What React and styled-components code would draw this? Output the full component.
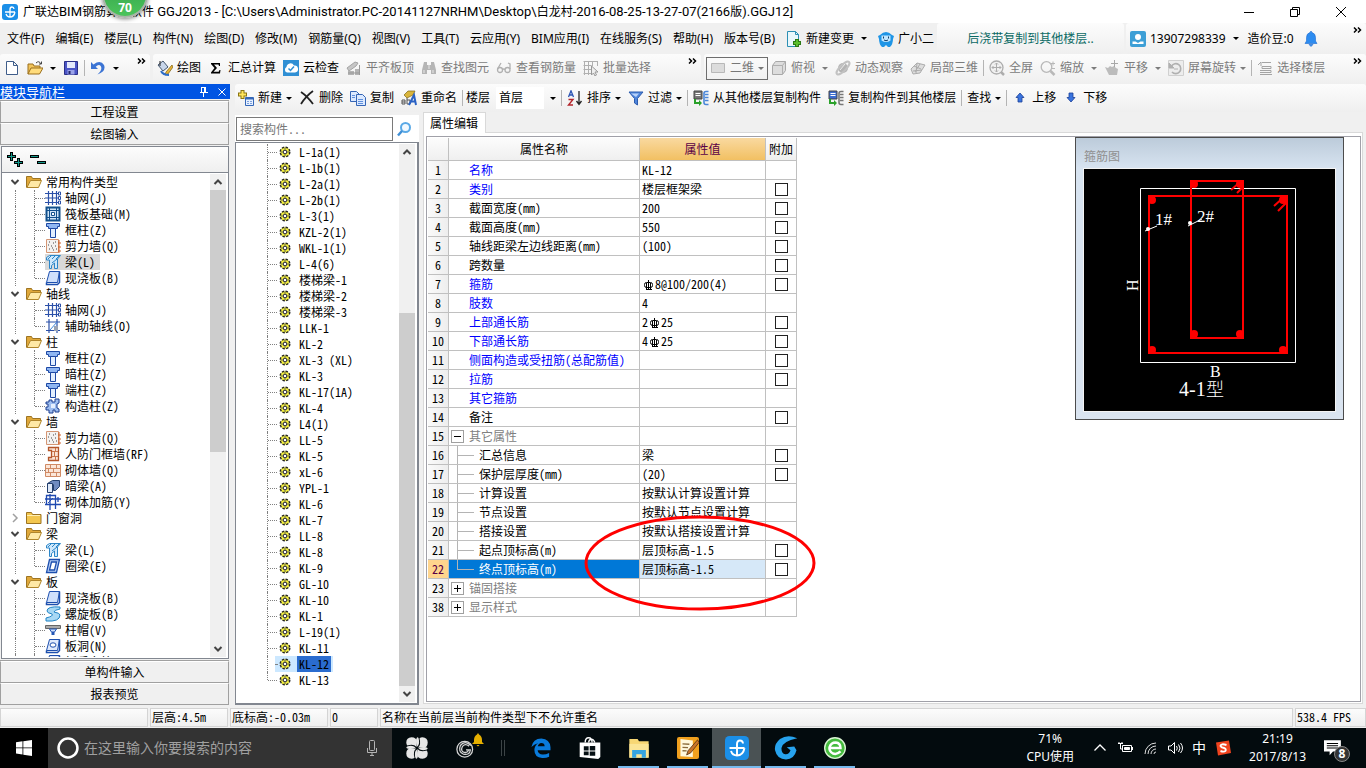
import styled, { createGlobalStyle, css } from 'styled-components'

// ? data
const menus = [
	'文件(F)',
	'编辑(E)',
	'楼层(L)',
	'构件(N)',
	'绘图(D)',
	'修改(M)',
	'钢筋量(Q)',
	'视图(V)',
	'工具(T)',
	'云应用(Y)',
	'BIM应用(I)',
	'在线服务(S)',
	'帮助(H)',
	'版本号(B)',
]

const drawTools = [
	{ icon: 'brush', label: '绘图' },
	{ icon: 'sigma', label: '汇总计算' },
	{ icon: 'cloud', label: '云检查' },
	{ icon: 'align', label: '平齐板顶', off: true },
	{ icon: 'binoculars', label: '查找图元', off: true },
	{ icon: 'glasses', label: '查看钢筋量', off: true },
	{ icon: 'batch', label: '批量选择', off: true },
]

const tree = [
	{
		name: '常用构件类型',
		open: true,
		items: [
			['grid', '轴网(J)'],
			['raft', '筏板基础(M)'],
			['column', '框柱(Z)'],
			['wall', '剪力墙(Q)'],
			['beam', '梁(L)', true],
			['slab', '现浇板(B)'],
		],
	},
	{
		name: '轴线',
		open: true,
		items: [
			['grid', '轴网(J)'],
			['axis', '辅助轴线(O)'],
		],
	},
	{
		name: '柱',
		open: true,
		items: [
			['column', '框柱(Z)'],
			['column', '暗柱(Z)'],
			['column', '端柱(Z)'],
			['gear', '构造柱(Z)'],
		],
	},
	{
		name: '墙',
		open: true,
		items: [
			['wall', '剪力墙(Q)'],
			['doorWall', '人防门框墙(RF)'],
			['brick', '砌体墙(Q)'],
			['hidden', '暗梁(A)'],
			['mesh', '砌体加筋(Y)'],
		],
	},
	{ name: '门窗洞', open: false, items: [] },
	{
		name: '梁',
		open: true,
		items: [
			['beam', '梁(L)'],
			['ring', '圈梁(E)'],
		],
	},
	{
		name: '板',
		open: true,
		more: true,
		items: [
			['slab', '现浇板(B)'],
			['spiral', '螺旋板(B)'],
			['cap', '柱帽(V)'],
			['hole', '板洞(N)'],
			['hole', '板受力筋(S)'],
		],
	},
]

const beams = [
	'L-1a(1)',
	'L-1b(1)',
	'L-2a(1)',
	'L-2b(1)',
	'L-3(1)',
	'KZL-2(1)',
	'WKL-1(1)',
	'L-4(6)',
	'楼梯梁-1',
	'楼梯梁-2',
	'楼梯梁-3',
	'LLK-1',
	'KL-2',
	'XL-3 (XL)',
	'KL-3',
	'KL-17(1A)',
	'KL-4',
	'L4(1)',
	'LL-5',
	'KL-5',
	'xL-6',
	'YPL-1',
	'KL-6',
	'KL-7',
	'LL-8',
	'KL-8',
	'KL-9',
	'GL-10',
	'KL-10',
	'KL-1',
	'L-19(1)',
	'KL-11',
	'KL-12',
	'KL-13',
]

// kind: b = blue name, n = normal, s = child of a section, g = section header
const props = [
	{ no: 1, kind: 'b', name: '名称', value: 'KL-12' },
	{ no: 2, kind: 'b', name: '类别', value: '楼层框架梁', check: true },
	{ no: 3, kind: 'n', name: '截面宽度(mm)', value: '200', check: true },
	{ no: 4, kind: 'n', name: '截面高度(mm)', value: '550', check: true },
	{ no: 5, kind: 'n', name: '轴线距梁左边线距离(mm)', value: '(100)', check: true },
	{ no: 6, kind: 'n', name: '跨数量', value: '', check: true },
	{ no: 7, kind: 'b', name: '箍筋', bar: ['', '8@100/200(4)'], check: true },
	{ no: 8, kind: 'b', name: '肢数', value: '4' },
	{ no: 9, kind: 'b', name: '上部通长筋', bar: ['2', '25'], check: true },
	{ no: 10, kind: 'b', name: '下部通长筋', bar: ['4', '25'], check: true },
	{ no: 11, kind: 'b', name: '侧面构造或受扭筋(总配筋值)', value: '', check: true },
	{ no: 12, kind: 'b', name: '拉筋', value: '', check: true },
	{ no: 13, kind: 'b', name: '其它箍筋', value: '' },
	{ no: 14, kind: 'n', name: '备注', value: '', check: true },
	{ no: 15, kind: 'g', name: '其它属性', value: '', sign: 'minus' },
	{ no: 16, kind: 's', name: '汇总信息', value: '梁', check: true },
	{ no: 17, kind: 's', name: '保护层厚度(mm)', value: '(20)', check: true },
	{ no: 18, kind: 's', name: '计算设置', value: '按默认计算设置计算' },
	{ no: 19, kind: 's', name: '节点设置', value: '按默认节点设置计算' },
	{ no: 20, kind: 's', name: '搭接设置', value: '按默认搭接设置计算' },
	{ no: 21, kind: 's', name: '起点顶标高(m)', value: '层顶标高-1.5', check: true },
	{ no: 22, kind: 's', name: '终点顶标高(m)', value: '层顶标高-1.5', check: true, active: true },
	{ no: 23, kind: 'g', name: '锚固搭接', value: '', sign: 'plus' },
	{ no: 38, kind: 'g', name: '显示样式', value: '', sign: 'plus' },
]

// ? icons, all on a 16 x 16 box
const floors = (page, line) => (
	<>
		<path d="M1 1h8v8H1z" fill={page} stroke="#444" />
		<path d="M2.5 3.5h5M2.5 5.5h5" stroke="#fff" />
		<path d="M3 9v3h3v-2l3 3-3 3v-2H1V9z" fill="#2aa12a" />
		<path d="M15.5 1.5H13q-2 0-2 2v9q0 2 2 2h2.5M12 4.5h3.500M12 7.500h3.500M12 10.500h3.500" stroke={line} strokeWidth="1.600" fill="none" />
	</>
)

const icons = {
	app: (
		<>
			<rect width="16" height="16" rx="3" fill="#1b8fe8" />
			<path d="M3 8h10M8 13V5.500q0-2.500 2-2.500 1.800 0 2 2M4 10q1 3 4 3 4 0 5-5" stroke="#fff" strokeWidth="1.300" fill="none" />
		</>
	),
	file: <path d="M2.500 1.500h7l4 4v9h-11zM9.500 1.500v4h4" fill="#fff" stroke="#3f5d8a" />,
	open: (
		<>
			<path d="M1 14V4h5l1 2h6v3" fill="#f2c45a" stroke="#9a6e1c" />
			<path d="M1 14l3-6h12l-3.500 6z" fill="#ffdc7c" stroke="#9a6e1c" />
			<path d="M9 3q3-3 5 1M14.500 1.500V4H12" stroke="#444" fill="none" />
		</>
	),
	save: (
		<>
			<path d="M1.500 1.500h13v13h-13z" fill="#4b55c6" stroke="#2b2f86" />
			<path d="M4 2h8v6H4z" fill="#e4e9fb" />
			<path d="M4.500 10h7v4.500h-7z" fill="#9aa2e8" />
			<path d="M5.500 11h2v3h-2z" fill="#23276d" />
		</>
	),
	undo: <path d="M1 2v7h7L5.700 6.700Q9 3.500 11 6.500q1.500 4-3.500 8 9-3.500 6.500-9.500Q10.500-.5 3.500 4.500z" fill="#3c74d4" />,
	brush: (
		<>
			<path d="M1 5l5-4 5 6-5 4z" fill="#c8d6ea" stroke="#44566e" />
			<path d="M3 1v5" stroke="#222" />
			<path d="M15 5l-6 7-1 3 3-1 5-7z" fill="#e8b434" stroke="#7a5c10" strokeWidth=".7" />
			<path d="M4 11q2 4 8 4" stroke="#2c6cc8" strokeWidth="2" fill="none" />
		</>
	),
	sigma: <path d="M3 3h9v3h-1l-.5-1.500H6L9 8l-3.500 3.700h5.200L11.500 10h1l-.5 3.500H3v-1L6.500 8 3 4z" fill="#000" />,
	cloud: (
		<>
			<rect width="16" height="16" fill="#2f8fd4" />
			<path d="M4 12.500a3 3 0 0 1-.5-5.500A4 4 0 0 1 11 5.500a3.500 3.500 0 0 1 1 7z" fill="#fff" />
			<path d="M5.500 8.500l2 2 3.500-4" stroke="#2f8fd4" strokeWidth="1.500" fill="none" />
		</>
	),
	align: (
		<>
			<path d="M1 8l8-6 3 1-2 3-7 5z" fill="#c6c6c6" stroke="#a4a4a4" />
			<path d="M2 11h6v4H2zM9 9h4v6H9z" fill="#b4b4b4" />
			<path d="M13.500 5v10M2 13h11" stroke="#999" />
		</>
	),
	binoculars: (
		<>
			<path d="M3 2h3v3h4V2h3l2 8v4h-5v-4H6v4H1v-4z" fill="#b5b5b5" />
			<path d="M3 10v3M12 10v3M8 5v4" stroke="#e8e8e8" />
		</>
	),
	glasses: (
		<g stroke="#b0b0b0" fill="none" strokeWidth="1.300">
			<circle cx="4" cy="10" r="2.500" />
			<circle cx="11.500" cy="10" r="2.500" />
			<path d="M6.500 9.500q1.200-1 2.500 0M1.500 9L5 3M14 9V4l-2-1" />
		</g>
	),
	batch: (
		<>
			<path d="M.5 1.500h14M.5 5.500h8M.5 9.500h8M.5 13.500h8M1.500 1v14M5.500 1v14M9.500 1v5M14.500 1v5" stroke="#b0b0b0" />
			<path d="M8.500 6v9l2-2 1.500 3 1.500-1-1.500-3h3z" stroke="#999" fill="#eee" />
		</>
	),
	flat: <path d="M1.500 3.500h13v9h-13z" fill="#dcdcdc" stroke="#b8b8b8" />,
	cube: (
		<>
			<path d="M1.500 5.500l3-4h10v9l-3 4h-10z" fill="#ddd" stroke="#a8a8a8" />
			<path d="M1.500 5.500h10v9M11.500 5.500l3-4" stroke="#b0b0b0" fill="none" />
		</>
	),
	planet: (
		<>
			<circle cx="8" cy="8" r="5" fill="#b4b4b4" />
			<ellipse cx="8" cy="8" rx="8.500" ry="3" transform="rotate(-45 8 8)" fill="none" stroke="#c2c2c2" strokeWidth="2" />
			<path d="M5 10l5-6" stroke="#eee" />
		</>
	),
	local3d: (
		<g fill="#dedede" stroke="#acacac">
			<path d="M1 9l6-6 8 2-5 8-7 1z" />
			<path d="M4 6l7 3M7 3l-1 10M3 11l9-1M10 4l-5 8" fill="none" />
		</g>
	),
	full: (
		<g stroke="#adadad" fill="none">
			<circle cx="7.500" cy="7.500" r="6.500" fill="#f1f1f1" strokeWidth="1.300" />
			<path d="M7.500 3v9M3 7.500h9M6 4.500L7.500 3 9 4.500M6 10.500L7.500 12 9 10.500M4.500 6L3 7.500 4.500 9M10.500 6L12 7.500 10.500 9" />
			<path d="M12 12l3 3" strokeWidth="2.500" />
		</g>
	),
	zoom: (
		<g stroke="#b8b8b8" fill="none">
			<circle cx="6.500" cy="7" r="5.300" strokeWidth="1.300" />
			<path d="M10.500 11l4 4" strokeWidth="2.500" />
			<path d="M11 3.500h4M13 1.500v4M12 8.500h3" />
		</g>
	),
	pan: (
		<>
			<path d="M1 7l3 1 2-2 2 1 2-1 2 2 2 1-1 6H5z" fill="#bcbcbc" />
			<path d="M7 3.500h7M10.500 0v7" stroke="#a8a8a8" />
		</>
	),
	rotate: (
		<>
			<path d="M.5.5h15v15H.5z" fill="#ededed" stroke="#d0d0d0" />
			<path d="M4 12a5 5 0 1 0-.5-6" stroke="#b0b0b0" strokeWidth="1.600" fill="none" />
			<path d="M1 3v5h5zM6 9h4" fill="#b0b0b0" stroke="#b0b0b0" />
		</>
	),
	pickFloor: <path d="M5 2.500h9M1 5l3-3v4M5 6.500h9v2H5zM3 10.500h11v2H3M3 14.500h12" stroke="#a4a4a4" fill="none" />,
	add: (
		<>
			<path d="M4.500 0v9M0 4.500h9" stroke="#8a7412" strokeWidth="4" />
			<path d="M4.500 1v7M1 4.500h7" stroke="#ffe45c" strokeWidth="2" />
			<path d="M7.500 7.500h8v8h-8z" fill="#e6f0ff" stroke="#3467b8" />
			<path d="M8 8.500h7" stroke="#3467b8" strokeWidth="2" />
			<path d="M9 11.500h2M12 11.500h2M9 13.500h2M12 13.500h2" stroke="#7ba0dd" />
		</>
	),
	remove: <path d="M2 2q6 4 12 12M14 1Q7 6 2 14" stroke="#222" strokeWidth="1.800" fill="none" />,
	copy: (
		<g fill="#dbe9ff" stroke="#3565b5">
			<path d="M.5 1.500h6l3 3v7h-9z" />
			<path d="M6.500 4.500h6l3 3v8h-9z" />
			<path d="M2 5.500h3M2 7.500h3M8 9.500h5M8 11.500h5M8 13.500h5" stroke="#5f8fdc" />
		</g>
	),
	rename: (
		<>
			<path d="M3 5l4-4h7l-2 4-6 3z" fill="#d9b53c" stroke="#7c6418" strokeWidth=".7" />
			<path d="M1 10h3v4H1zM1 12h3M6 8v6h3v-4H6" stroke="#555" fill="none" />
			<path d="M8 15l5-10 2 10M10 11.500h4.500" stroke="#2a62c4" strokeWidth="2" fill="none" />
		</>
	),
	sort: (
		<>
			<path d="M1.500 7L4 .8 6.500 7M2.500 5h3" stroke="#2c55b4" strokeWidth="1.300" fill="none" />
			<path d="M1.500 9.500h4.500L1.500 15H6" stroke="#b4262c" strokeWidth="1.400" fill="none" />
			<path d="M12 1v13M9.500 11L12 14.500 14.500 11" stroke="#222" strokeWidth="1.300" fill="none" />
		</>
	),
	filter: (
		<>
			<path d="M1 2h14L9.500 8.500V15l-3-2V8.500z" fill="#4f86dc" stroke="#2d5cae" />
			<path d="M3 3.500h8L8 7z" fill="#b8d2fa" />
		</>
	),
	fromFloor: floors('#777', '#4a86d8'),
	toFloor: floors('#3c6cd0', '#777'),
	up: <path d="M8 3l4 4.500h-2V12H6V7.500H4z" fill="#3a74de" stroke="#1b3f97" strokeWidth=".8" />,
	down: <path d="M8 12L4 7.500h2V3h4v4.500h2z" fill="#3a74de" stroke="#1b3f97" strokeWidth=".8" />,
	change: (
		<>
			<path d="M1.500.5h8l3 3v12h-11z" fill="#e9f7fc" stroke="#2c8fb4" />
			<path d="M9.500.5v3h3" fill="none" stroke="#2c8fb4" />
			<path d="M11 8v8M7 12h8" stroke="#2c7a16" strokeWidth="4" />
			<path d="M11 9v6M8 12h6" stroke="#5cc02c" strokeWidth="2" />
		</>
	),
	robot: (
		<>
			<path d="M2 4q6-6 12 0l2 1-1 3q0 5-3 8h-2l-2-2-2 2H4Q1 13 1 8L0 5z" fill="#1f95e6" />
			<path d="M3.500 4.500h9v5q-4.500 3-9 0z" fill="#bfe6ff" />
			<path d="M5.500 5.500v2M10.500 5.500v2M6 9q2 1.500 4 0" stroke="#123c66" fill="none" />
		</>
	),
	user: (
		<>
			<rect width="16" height="16" rx="2" fill="#3d9fd6" />
			<circle cx="8" cy="6" r="3" fill="#fff" />
			<path d="M2.500 13v-2.500h3L8 12l2.500-1.500h3V13z" fill="#fff" />
		</>
	),
	bell: <path d="M8 0l1 1.500q3.500 1 3.500 5V10l1.500 2.500H2L3.500 10V6.500q0-4 3.500-5zM6 13.500h4L8 15.500z" fill="#2d8cf0" stroke="#1b6ad0" strokeWidth=".6" />,
	grid: (
		<>
			<path d="M0 3.500h13M0 8h13M0 12.500h13M3.500 1v14M7.500 1v14M11.500 1v14" stroke="#2b50a8" strokeWidth="1.200" />
			<path d="M13.500 2h2v3h-2zM13.500 6.500h2v3h-2zM13.500 11h2v3h-2z" fill="#fff" stroke="#2b50a8" />
		</>
	),
	raft: (
		<g fill="none" stroke="#12508c">
			<path d="M1.500 1.500h13v13h-13z" strokeWidth="2" fill="#cfe4f7" />
			<path d="M1 4.500h14M1 11.500h14M4.500 1v14M11.500 1v14" />
			<path d="M6.500 6.500h3v3h-3z" fill="#fff" />
		</g>
	),
	column: (
		<>
			<path d="M1.500 1.500h13v3h-2v2h-9v-2h-2z" fill="#8fb6f2" stroke="#1d48a4" />
			<path d="M5.500 6.500h5v9h-5z" fill="#e2eefe" stroke="#1d48a4" />
		</>
	),
	wall: (
		<>
			<path d="M1.500 1.500h12v13h-12z" fill="#f4f2f0" stroke="#d49674" />
			<path d="M4 4h1M8 5h1M6 8h1M10 8h1M4 11h1M8 12h1M11 11h1M10 4h1M3 7h1M7 10h1" stroke="#444" />
			<path d="M14 2v13M13 5h3M13 9h3M13 13h3" stroke="#d0622a" />
		</>
	),
	beam: (
		<>
			<path d="M1.500 3.500l3-2h11l-3 3.500v9.500h-3V9l-3 2.500v3h-2V6h-3z" fill="#cfe8fb" stroke="#2c86c8" />
			<path d="M3 5l3-3M7 5l3-3M11 5l3-3M7 9l5-4" stroke="#2c86c8" />
		</>
	),
	slab: (
		<>
			<path d="M4.500 1.500h10l-2 11h-11z" fill="#cfe0fb" stroke="#1d4fae" />
			<path d="M1.500 12.500v2h11l2-2v-11" fill="none" stroke="#1d4fae" strokeWidth="1.500" />
		</>
	),
	axis: (
		<>
			<path d="M1 4h14M1 12.500h14M4 1v14M12 1v14" stroke="#2b50a8" strokeWidth="1.200" />
			<path d="M5 12l7-8" stroke="#3d86dc" />
			<path d="M9 8h4v5H9z" fill="#9aa4b4" />
		</>
	),
	gear: (
		<>
			<path d="M4 2h3v2h3V1h4v4l-2 1v4l2 1v3h-4v-2H8v3H4v-3H1V9h2V6H1V4h3z" fill="#9dbdf0" stroke="#1d3f90" />
			<path d="M6 6h4v4H6z" fill="#e6effd" />
		</>
	),
	doorWall: (
		<>
			<path d="M3.500 1.500h10v13h-10v-3h3v-7h-3z" fill="#fbe3d4" stroke="#b4562a" strokeWidth="1.300" />
			<path d="M7 5.500h6M7 10.500h6M10.500 2v3M10.500 11v3M9.500 6v4" stroke="#c8764c" />
		</>
	),
	brick: <path d="M.5 2.500h15v12H.5zM.5 6.500h15M.5 10.500h15M5.500 2.500v4M11.500 2.500v4M3.500 6.500v4M8.500 6.500v4M5.500 10.500v4M11.500 10.500v4" fill="#fbe6d8" stroke="#d08a64" />,
	hidden: (
		<>
			<path d="M2.500 5.500l5-3h7v6l-4 4h-2v-6z" fill="#6f8bc0" stroke="#24406e" />
			<path d="M2.500 5.500h5v9h-5z" fill="#dfe9f8" stroke="#24406e" />
		</>
	),
	mesh: (
		<>
			<path d="M1.500 1.500h9v9h-9zM0 5h16M5 0v16M10.500 3v12M0 10.500h16M13 3v5" stroke="#1f49b0" strokeWidth="1.300" fill="none" />
			<path d="M3 9l5-5" stroke="#1f49b0" />
		</>
	),
	ring: <path d="M4.500 1.500h10l-3 13h-10zM6.500 4h5l-2 8h-5z" fill="#b9d0f6" fillRule="evenodd" stroke="#1d4fae" strokeWidth="1.300" />,
	spiral: <path d="M15 1q-13-1-13 4 0 2 5 3 2 2-6 4v3q14 1 14-6 0-2-6-3 0-2 6-3z" fill="#a8d8f4" stroke="#2184c6" />,
	cap: (
		<>
			<path d="M.5 3.500h15v3H.5z" fill="#aaa" stroke="#666" />
			<path d="M4.500 7h7l-2 3h-3z" fill="#cfe0fb" stroke="#2456b4" />
			<path d="M6.500 10h3v3h-3z" fill="#2456b4" />
		</>
	),
	hole: (
		<>
			<path d="M4.500 1.500h10l-2 11h-11z" fill="#dfeafd" stroke="#1d4fae" />
			<path d="M1.500 12.500v2h11l2-2v-11" fill="none" stroke="#1d4fae" strokeWidth="1.500" />
			<ellipse cx="8" cy="7" rx="3" ry="2.200" fill="#fff" stroke="#1d4fae" />
		</>
	),
	folderOpen: (
		<>
			<path d="M.5 13.500v-11h5l1 2h8v3" fill="#e0a83a" stroke="#9d7422" />
			<path d="M1 13.500L4.500 6.500h11l-3 7z" fill="#ffe9a6" stroke="#b0862c" />
		</>
	),
	folder: (
		<>
			<path d="M.5 13.500v-11h5l1 2h8.500v9z" fill="#f3c64e" stroke="#9d7422" />
			<path d="M1 5.500h13" stroke="#ffefb4" />
		</>
	),
	cog: (
		<>
			<circle cx="8" cy="8" r="4.800" fill="#f2ee3c" />
			<circle cx="8" cy="8" r="4.800" fill="none" stroke="#222" strokeWidth="1.400" strokeDasharray="2.400 1.370" />
			<path d="M6.500 6.500h3v3h-3z" fill="#fff" stroke="#444" />
			<path d="M8 4v2M8 10v2M4 8h2M10 8h2" stroke="#555" />
		</>
	),
	search: (
		<>
			<circle cx="9.500" cy="6.500" r="4.500" fill="#f2f9ff" stroke="#5aa9e6" strokeWidth="2" />
			<path d="M6 10l-4 4.500" stroke="#3f8fd6" strokeWidth="2.500" />
		</>
	),
	pin: <path d="M5.500 3v5M9.500 3v5M5 3.500h5M4 8.500h8M7.500 9v4M8.500 3v5" stroke="#fff" fill="none" />,
	close: <path d="M4.500 4.500l7 7M11.500 4.500l-7 7" stroke="currentColor" />,
	chevronUp: <path d="M4.500 10L8 6.500l3.500 3.500" stroke="#444" strokeWidth="2" fill="none" />,
	chevronDown: <path d="M4.500 6L8 9.500 11.500 6" stroke="#444" strokeWidth="2" fill="none" />,
	chevronRight: <path d="M6 4l4 4-4 4" stroke="#a0a0a0" strokeWidth="1.500" fill="none" />,
	more: <path d="M4 4.500L6.500 7 4 9.500M8 4.500L10.500 7 8 9.500" stroke="#000" strokeWidth="1.500" fill="none" />,
	expand: (
		<>
			<path d="M4.500 0v9M0 4.500h9M11.500 6v9M7 10.500h9" stroke="#000" strokeWidth="3" />
			<path d="M4.500 1v7M1 4.500h7M11.500 7v7M8 10.500h7" stroke="#12988a" />
		</>
	),
	collapse: (
		<>
			<path d="M0 4.500h9M7 10.500h9" stroke="#000" strokeWidth="3" />
			<path d="M1 4.500h7M8 10.500h7" stroke="#12988a" />
		</>
	),
	minimize: <path d="M3 8.500h10" stroke="#000" />,
	restore: <path d="M3.500 5.500h7v7h-7zM5.500 5V3.500h7v7H11" stroke="#000" fill="none" />,
	quit: <path d="M3 3l10 10M13 3L3 13" stroke="#000" />,
	// taskbar
	windows: <path d="M0 2.300l6.500-1v6.200H0zM7.300 1.200L16 0v7.500H7.300zM0 8.300h6.500v6.200L0 13.600zM7.300 8.300H16V16l-8.700-1.300z" fill="#fff" />,
	cortana: <circle cx="8" cy="8" r="6.300" fill="none" stroke="#fff" strokeWidth="1.700" />,
	mic: (
		<g stroke="#b4b4b4" fill="none">
			<rect x="5.500" y=".5" width="5" height="10" rx="1" />
			<path d="M3.500 8v4.500h9V8M8 12.500v3M6 15.500h4" />
		</g>
	),
	// four curled blades
	fan: (
		<g fill="#e6e6e6">
			{[0, 90, 180, 270].map((turn) => (
				<path
					key={turn}
					transform={`rotate(${turn} 8 8)`}
					d="M7.700 7.300Q5.500 4.800 1 6.200.2 5.500.2 4 .3.300 4 .2q3.700.1 3.900 3.300zM7 7.600Q4.500 5.700.8 6.900.1 7.300.3 8q1.200.9 3 .7 2.200-.1 3.700-1.100z"
				/>
			))}
		</g>
	),
	swirl: (
		<g fill="none" stroke="#d6d6d6">
			<circle cx="7" cy="9" r="6.300" />
			<path d="M12 6Q7 1.500 3.500 6 1.500 11 6 13q5 1 5.500-3.500H8M10.500 6.500Q7 4 5 7q-1.500 3.500 1.500 4.500Q9 12 10 10" />
		</g>
	),
	edge: <path d="M.3 7.200Q1.500.3 8.300.3q6.800.4 7.300 7v2.500H5.300q.3 3.200 4.200 3.400 2.500 0 5-1.300v3q-2.500 1.200-5.600 1.100-6.200-.5-6.200-6.400 0-3.400 3-5.400Q3 4.700.3 7.200zM5.400 6.600h5.500Q10.800 4 8.300 4 6 4.100 5.400 6.600z" fill="#0a7bdc" />,
	store: (
		<>
			<path d="M4.500 4q0-3.500 2.500-3.500T9.500 4M7 4q.3-2.500 2-2.500T11.500 4" fill="none" stroke="#fff" />
			<path d="M.5 4h15v10.500L14 16 .5 14.500z" fill="#fff" />
			<path d="M3.500 6.800h3.500v3H3.500zM7.800 6.500h4v3.300h-4zM3.500 10.500h3.500v2.800H3.500zM7.800 10.500h4v3.200h-4z" fill="#061014" />
		</>
	),
	explorer: (
		<>
			<path d="M1 1.500h6l1 1.500h7v12H1z" fill="#f7d774" />
			<path d="M1 5h14v10H1z" fill="#fbe596" />
			<path d="M3 15V9.500h10V15h-3v-2.500H6V15z" fill="#35a4e0" />
		</>
	),
	note: (
		<>
			<rect width="16" height="16" rx="1.500" fill="#f0a01e" />
			<path d="M2.500 1.500l9 1v12l-9-.5z" fill="#fff8dc" />
			<path d="M4 5l5 .3M4 7.500l4 .2M4 10l3 .1" stroke="#8a6a3a" />
			<path d="M15 2L8 10l-1 3 3-1.500 6-7.500z" fill="#c8742a" stroke="#5a3310" strokeWidth=".6" />
		</>
	),
	glodon: <path d="M15.500 1.500Q9-1.500 4 2 0 5.500.7 9.500 2 15.500 8 15.700q5.500-.2 7-6.200l-1.500-2.500-5 .5 2.500 2q-1 3-3.500 2.700Q4.800 11.500 5 8q.7-4.500 10.500-6.500z" fill="#27a3ee" />,
	browser: (
		<>
			<circle cx="8" cy="8" r="7.500" fill="#45bb3e" stroke="#d9f4d2" />
			<path d="M12 10.500Q9.500 13 6.500 12 3.500 10.500 4 7.500 5 4 8.500 4q3.500.3 3.500 4H4.500" fill="none" stroke="#fff" strokeWidth="1.800" />
		</>
	),
	trayUp: <path d="M2.500 10.500L8 5l5.500 5.500" stroke="#fff" fill="none" strokeWidth="1.300" />,
	battery: (
		<g stroke="#fff" fill="none">
			<path d="M5.500 5.500h9v6h-9zM15.500 7v3" />
			<path d="M7.500 7.500h5v2h-5z" fill="#fff" />
			<path d="M1 3.500h5M2 2v1.500M5 2v1.500M3.500 4v5h2" />
		</g>
	),
	wifi: <path d="M3 14A11 11 0 0 1 14 3M6 14a8 8 0 0 1 8-8M9 14a5 5 0 0 1 5-5M12 14a2 2 0 0 1 2-2" stroke="#ddd" fill="none" />,
	sound: <path d="M1.500 6h2.500l3.500-3.500v11L4 10H1.500zM9.500 6q1.500 2 0 4.500M11.500 4.500q3 3.500 0 7.500M13.500 3q4 5 0 10" stroke="#fff" fill="none" />,
	sogou: (
		<>
			<path d="M1 2.500L14 .5l2 12.500-13 2.500z" fill="#f0431e" />
			<path d="M11.500 5Q6 3.200 5.500 6q.5 1.500 3.500 2 2.500.8 1.500 2.800-1.500 1.500-5 .2" stroke="#fff" strokeWidth="1.900" fill="none" />
		</>
	),
	message: (
		<>
			<path d="M0 1h15v10H8l-3 3.500V11H0z" fill="#fff" />
			<path d="M2.500 4h10M2.500 6h10M2.500 8h10" stroke="#000" />
		</>
	),
}

const Icon = ({ name, size = 16 }) => (
	<Svg width={size} height={size} viewBox="0 0 16 16" aria-hidden="true">
		{icons[name]}
	</Svg>
)

// reinforcement grade mark that stands before a diameter
const BarMark = () => (
	<Svg width="13" height="12" viewBox="0 0 13 12" aria-label="Φ">
		<rect x="2.500" y="3.500" width="8" height="5" rx="2" fill="none" stroke="currentColor" />
		<path d="M6.500 1v10M4.500 4v7M8.500 4v7M4 10.500h6" stroke="currentColor" fill="none" />
	</Svg>
)

const Tool = ({ icon, label, off, arrow, wide }) => (
	<ToolButton type="button" $off={off}>
		{icon && <Icon name={icon} />}
		{label}
		{arrow && <Caret $wide={wide} />}
	</ToolButton>
)

const TitleBar = () => (
	<Title>
		<Icon name="app" />
		<h1>
			广联达<span>BIM</span>钢筋算量软件
			<span> GGJ2013 - [C:\Users\Administrator.PC-20141127NRHM\Desktop\</span>
			白龙村<span>-2016-08-25-13-27-07(2166</span>版<span>).GGJ12]</span>
		</h1>
		<Bubble>70</Bubble>
		<WindowButton type="button" aria-label="最小化">
			<Icon name="minimize" />
		</WindowButton>
		<WindowButton type="button" aria-label="还原">
			<Icon name="restore" />
		</WindowButton>
		<WindowButton type="button" aria-label="关闭">
			<Icon name="quit" />
		</WindowButton>
	</Title>
)

const MenuBar = () => (
	<MenuRow>
		<MenuList>
			{menus.map((menu) => (
				<MenuButton type="button" key={menu}>
					{menu}
				</MenuButton>
			))}
			<Tool icon="change" label="新建变更" arrow wide />
			<Tool icon="robot" label="广小二" />
		</MenuList>
		<Promo href="#promo">后浇带复制到其他楼层..</Promo>
		<Account>
			<Tool icon="user" label="13907298339" arrow wide />
			<Tool label="造价豆:0" />
			<Icon name="bell" />
			<More>
				<Icon name="more" />
			</More>
		</Account>
	</MenuRow>
)

const MainTools = () => (
	<ToolRow>
		<Band $width={150}>
			<Icon name="file" />
			<Icon name="open" />
			<Caret />
			<Icon name="save" />
			<Divider />
			<Icon name="undo" />
			<Caret />
			<More>
				<Icon name="more" />
			</More>
		</Band>
		<Band $width={548}>
			{drawTools.map((tool) => (
				<Tool key={tool.label} {...tool} />
			))}
			<More>
				<Icon name="more" />
			</More>
		</Band>
		<Band $grow>
			<ViewBox type="button">
				<Icon name="flat" />
				二维
				<Caret />
			</ViewBox>
			<Tool icon="cube" label="俯视" off arrow wide />
			<Tool icon="planet" label="动态观察" off />
			<Tool icon="local3d" label="局部三维" off />
			<Divider />
			<Tool icon="full" label="全屏" off />
			<Tool icon="zoom" label="缩放" off arrow wide />
			<Tool icon="pan" label="平移" off arrow wide />
			<Tool icon="rotate" label="屏幕旋转" off arrow />
			<Divider />
			<Tool icon="pickFloor" label="选择楼层" off />
			<More>
				<Icon name="more" />
			</More>
		</Band>
	</ToolRow>
)

const NavPanel = () => (
	<Nav>
		<NavHead>
			<h2>模块导航栏</h2>
			<Icon name="pin" />
			<Icon name="close" />
		</NavHead>
		<NavButton type="button">工程设置</NavButton>
		<NavButton type="button">绘图输入</NavButton>
		<NavBox>
			<NavTools>
				<Icon name="expand" />
				<Icon name="collapse" />
			</NavTools>
			<Scroller>
				<Tree>
					{tree.map((group) => (
						<li key={group.name}>
							<TreeRow>
								<Twist>
									<Icon name={group.open ? 'chevronDown' : 'chevronRight'} />
								</Twist>
								<Icon name={group.open ? 'folderOpen' : 'folder'} />
								<TreeLabel>{group.name}</TreeLabel>
							</TreeRow>
							<ul>
								{group.items.map(([icon, label, active], i) => (
									<TreeRow key={label}>
										<Guide $indent={12} $width={19} />
										<Guide $half={!group.more && i === group.items.length - 1} />
										<Dash />
										<TreeItem $active={active}>
											<Icon name={icon} />
											{label}
										</TreeItem>
									</TreeRow>
								))}
							</ul>
						</li>
					))}
				</Tree>
				<ScrollBar>
					<Icon name="chevronUp" />
					<Track>
						<Thumb $height="58%" />
					</Track>
					<Icon name="chevronDown" />
				</ScrollBar>
			</Scroller>
		</NavBox>
		<NavButton type="button">单构件输入</NavButton>
		<NavButton type="button">报表预览</NavButton>
	</Nav>
)

const ComponentPanel = () => (
	<Parts>
		<SearchRow>
			<input type="text" placeholder="搜索构件..." aria-label="搜索构件" />
			<button type="button" aria-label="搜索">
				<Icon name="search" />
			</button>
		</SearchRow>
		<Scroller $framed>
			<Tree>
				{beams.map((beam, i) => (
					<TreeRow key={beam}>
						<Guide $indent={30} $half={i === beams.length - 1} />
						<PartItem $active={beam === 'KL-12'}>
							<Dash />
							<Icon name="cog" />
							<span>{beam}</span>
						</PartItem>
					</TreeRow>
				))}
			</Tree>
			<ScrollBar>
				<Icon name="chevronUp" />
				<Track>
					<Thumb $top="29%" $height="71%" />
				</Track>
				<Icon name="chevronDown" />
			</ScrollBar>
		</Scroller>
	</Parts>
)

const PropertyTable = () => (
	<Sheet>
		<thead>
			<tr>
				<th aria-label="序号" />
				<th>属性名称</th>
				<th className="value">属性值</th>
				<th>附加</th>
			</tr>
		</thead>
		<tbody>
			{props.map((row) => (
				<PropRow key={row.no} $kind={row.kind} $active={row.active}>
					<th scope="row">{row.no}</th>
					<td className="name">
						<div>
							{row.sign && <Sign type="button" aria-label={row.name} $plus={row.sign === 'plus'} />}
							{row.kind === 's' && <Elbow $last={row.no === 22} />}
							{row.name}
						</div>
					</td>
					<td className="value">
						{row.bar ? (
							<>
								{row.bar[0]}
								<BarMark />
								{row.bar[1]}
							</>
						) : (
							row.value
						)}
					</td>
					<td className="extra">{row.check && <input type="checkbox" aria-label={`附加 ${row.name}`} />}</td>
				</PropRow>
			))}
		</tbody>
	</Sheet>
)

const StirrupWindow = () => (
	<Floating>
		<h3>箍筋图</h3>
		<svg width="251" height="242" viewBox="0 0 251 242" role="img" aria-label="4-1型">
			<rect width="251" height="242" fill="#000" />
			<path d="M56.500 19.500h155v174h-155z" fill="none" stroke="#fff" />
			<g fill="none" stroke="#f00" strokeWidth="2">
				<path d="M65 27h138v157H65zM107 12h52v157h-52z" />
				<path d="M190 37l10-9M194 42l9-9M147 21l9-8M153 24l6-6" />
			</g>
			<g fill="#f00">
				<circle cx="68" cy="31" r="4" />
				<circle cx="199" cy="31" r="4" />
				<circle cx="68" cy="181" r="4" />
				<circle cx="199" cy="181" r="4" />
				<circle cx="110" cy="15" r="4" />
				<circle cx="156" cy="15" r="4" />
				<circle cx="110" cy="165" r="4" />
				<circle cx="156" cy="165" r="4" />
			</g>
			<path d="M61 62l12-5M104 57l14-7" stroke="#fff" />
			<circle cx="64" cy="60" r="2" fill="#fff" />
			<circle cx="106" cy="54" r="2" fill="#fff" />
			<g fill="#fff" fontFamily='"Liberation Serif", "Noto Sans CJK SC", serif' fontSize="17">
				<text x="71" y="56">1#</text>
				<text x="113" y="53">2#</text>
				<text x="126" y="208" fontSize="16">B</text>
				<text x="54" y="122" fontSize="16" transform="rotate(-90 54 122)">H</text>
				<text x="95" y="227" fontSize="20">4-1</text>
				<text x="122" y="227" fontSize="18" fontWeight="300">型</text>
			</g>
		</svg>
	</Floating>
)

const StatusBar = () => (
	<Status>
		<StatusCell $width={148} />
		<StatusCell $width={78}>层高:4.5m</StatusCell>
		<StatusCell $width={98}>底标高:-0.03m</StatusCell>
		<StatusCell $width={48}>0</StatusCell>
		<StatusCell $grow>名称在当前层当前构件类型下不允许重名</StatusCell>
		<StatusCell $width={71}>538.4 FPS</StatusCell>
	</Status>
)

const TaskBar = () => (
	<Tasks>
		<Start type="button" aria-label="开始">
			<Icon name="windows" />
		</Start>
		<TaskSearch>
			<Icon name="cortana" size={24} />
			<input type="text" placeholder="在这里输入你要搜索的内容" aria-label="搜索" />
			<Icon name="mic" />
		</TaskSearch>
		<Task type="button" aria-label="风扇">
			<Icon name="fan" size={22} />
		</Task>
		<Task type="button" aria-label="通知">
			<Icon name="swirl" size={20} />
			<Alert viewBox="0 0 12 14" width="12" height="14">
				<path d="M6 0l1 1.500Q10 3 10 7v2l2 2H0l2-2V7q0-4 3-5.500zM4.500 12h3L6 13.500z" fill="#e6b000" />
			</Alert>
		</Task>
		<TaskGap />
		<Task type="button" aria-label="Edge">
			<Icon name="edge" size={20} />
		</Task>
		<Task type="button" aria-label="应用商店">
			<Icon name="store" size={22} />
		</Task>
		<Task type="button" aria-label="文件资源管理器" $running>
			<Icon name="explorer" size={22} />
		</Task>
		<Task type="button" aria-label="便签" $running>
			<Icon name="note" size={22} />
		</Task>
		<Task type="button" aria-label="GGJ2013" $running $active>
			<Icon name="app" size={24} />
		</Task>
		<Task type="button" aria-label="广联达" $running>
			<Icon name="glodon" size={24} />
		</Task>
		<Task type="button" aria-label="浏览器" $running>
			<Icon name="browser" size={22} />
		</Task>
		<Tray>
			<Stack>
				<span>71%</span>
				<span>CPU使用</span>
			</Stack>
			<TrayIcons>
				<Icon name="trayUp" />
				<Icon name="battery" />
				<Icon name="wifi" />
				<Icon name="sound" />
				<span>中</span>
				<Icon name="sogou" />
			</TrayIcons>
			<Stack>
				<span>21:19</span>
				<span>2017/8/13</span>
			</Stack>
			<Center type="button" aria-label="操作中心">
				<Icon name="message" size={18} />
				<Count>8</Count>
			</Center>
		</Tray>
	</Tasks>
)

const App = () => {
	return (
		<Page>
			<GlobalStyle />
			<TitleBar />
			<MenuBar />
			<MainTools />
			<Body>
				<NavPanel />
				<Work>
					<EditTools>
						<Tool icon="add" label="新建" arrow />
						<Tool icon="remove" label="删除" />
						<Tool icon="copy" label="复制" />
						<Tool icon="rename" label="重命名" />
						<Divider />
						<FloorPick>
							楼层
							<select defaultValue="首层">
								<option>首层</option>
							</select>
							<Caret />
						</FloorPick>
						<Divider />
						<Tool icon="sort" label="排序" arrow />
						<Tool icon="filter" label="过滤" arrow />
						<Divider />
						<Tool icon="fromFloor" label="从其他楼层复制构件" />
						<Tool icon="toFloor" label="复制构件到其他楼层" />
						<Divider />
						<Tool label="查找" arrow />
						<Divider />
						<Tool icon="up" label="上移" />
						<Tool icon="down" label="下移" />
					</EditTools>
					<Panes>
						<ComponentPanel />
						<Editor>
							<Tab>属性编辑</Tab>
							<EditorBody>
								<SheetFrame>
									<PropertyTable />
									<StirrupWindow />
									<Mark viewBox="0 0 232 96" width="232" height="96" aria-hidden="true">
										<ellipse cx="116" cy="48" rx="114" ry="46" fill="none" stroke="#f00" strokeWidth="3" />
									</Mark>
								</SheetFrame>
							</EditorBody>
						</Editor>
					</Panes>
				</Work>
			</Body>
			<StatusBar />
			<TaskBar />
		</Page>
	)
}

export default App

// ? styled
const song = '"Noto Sans Mono CJK SC", "Noto Sans CJK SC", sans-serif'
const hei = '"Noto Sans", "Noto Sans CJK SC", sans-serif'
const silver = 'linear-gradient(#fcfcfc, #efefef)'

const GlobalStyle = createGlobalStyle`
	* {
		box-sizing: border-box;
	}

	body {
		margin: 0;
		overflow: hidden;
		background: #f0f0f0;
	}

	button, input, select {
		font: inherit;
		color: inherit;
	}

	button {
		border: 0;
		padding: 0;
		background: none;
	}

	ul {
		list-style: none;
		margin: 0;
		padding: 0;
	}

	h1, h2, h3 {
		margin: 0;
		font-size: 12px;
		font-weight: 400;
	}
`

const Page = styled.div`
	display: flex;
	flex-direction: column;
	height: 100vh;
	font: 12px/16px ${hei};
	color: #000;
	white-space: nowrap;
`

const Svg = styled.svg`
	display: block;
	flex: none;
`

const Title = styled.header`
	position: relative;
	display: flex;
	align-items: center;
	gap: 5px;
	flex: none;
	height: 23px;
	padding: 0 5px 0 2px;
	background: #fff;

	h1 {
		flex: 1;
	}

	h1 span {
		font: 13px/16px Roboto, sans-serif;
	}
`

const Bubble = styled.span`
	position: absolute;
	left: 102px;
	top: -28px;
	display: flex;
	align-items: flex-end;
	justify-content: center;
	width: 46px;
	height: 46px;
	border: 2px solid #aab4aa;
	border-radius: 50%;
	background: linear-gradient(#2e9a45, #4cc45c);
	box-shadow: 0 1px 4px rgba(0, 0, 0, 0.5);
	color: #fff;
	font-weight: 700;
	z-index: 2;
`

const WindowButton = styled.button`
	display: flex;
	justify-content: center;
	width: 41px;
`

const MenuRow = styled.nav`
	display: flex;
	align-items: stretch;
	gap: 2px;
	flex: none;
	height: 31px;
`

const MenuList = styled.div`
	display: flex;
	align-items: center;
	gap: 11px;
	width: 935px;
	padding-left: 7px;
`

const MenuButton = styled.button`
	flex: none;
`

const Promo = styled.a`
	display: flex;
	align-items: center;
	justify-content: center;
	width: 187px;
	border-radius: 3px;
	background: ${silver};
	color: #0b6a64;
	text-decoration: none;
`

const Account = styled.div`
	display: flex;
	align-items: center;
	gap: 9px;
	flex: 1;
	padding-left: 4px;
	border-radius: 3px;
	background: ${silver};
`

const More = styled.span`
	align-self: flex-start;
	margin-left: auto;
`

const ToolButton = styled.button`
	display: flex;
	align-items: center;
	gap: 4px;
	flex: none;
	color: ${({ $off }) => ($off ? '#7c7c7c' : '#000')};
`

const Caret = styled.i`
	flex: none;
	margin-left: ${({ $wide }) => ($wide ? 3 : 0)}px;
	border: 3px solid transparent;
	border-top-color: currentColor;
	border-bottom: 0;
`

const ToolRow = styled.div`
	display: flex;
	gap: 3px;
	flex: none;
	height: 30px;
`

const Band = styled.div`
	display: flex;
	align-items: center;
	gap: 7px;
	${({ $grow, $width }) => ($grow ? 'flex: 1;' : `width: ${$width}px;`)}
	padding-left: 4px;
	padding-bottom: 2px;
	border-radius: 3px;
	background: ${silver};
`

const Divider = styled.span`
	flex: none;
	width: 1px;
	height: 16px;
	margin: 0 -2px;
	background: #b4b4b4;
`

const ViewBox = styled.button`
	display: flex;
	align-items: center;
	gap: 4px;
	flex: none;
	height: 23px;
	margin: 0 -4px 0 -2px;
	padding: 0 3px;
	border: 1px solid #6e6e6e;
	color: #777;
`

const Body = styled.main`
	display: flex;
	gap: 5px;
	flex: 1;
	min-height: 0;
`

// left navigation
const Nav = styled.aside`
	display: flex;
	flex-direction: column;
	width: 230px;
	padding-bottom: 2px;
	font-family: ${song};
`

const NavHead = styled.div`
	display: flex;
	align-items: center;
	gap: 2px;
	flex: none;
	height: 15px;
	margin-bottom: 2px;
	background: #0054e3;
	color: #fff;

	h2 {
		flex: 1;
		font-size: 13px;
	}
`

const NavButton = styled.button`
	flex: none;
	height: 22px;
	margin-right: 1px;
	border: 1px solid #a0a0a0;
	border-top-color: #fff;
	background: #f0f0f0;
	box-shadow: 0 -1px 0 #a0a0a0;
`

const NavBox = styled.div`
	display: flex;
	flex-direction: column;
	flex: 1;
	min-height: 0;
	margin: 1px 1px 2px 1px;
	border: 1px solid #828790;
`

const NavTools = styled.div`
	display: flex;
	align-items: center;
	gap: 7px;
	flex: none;
	height: 26px;
	padding-left: 5px;
	border-bottom: 1px solid #828790;
	background: ${silver};
`

const Scroller = styled.div`
	display: flex;
	flex: 1;
	min-height: 0;
	overflow: hidden;
	padding: 1px 2px 1px 1px;
	background: #fff;
	${({ $framed }) =>
		$framed &&
		css`
			border: 1px solid #828790;
			border-width: 1px 2px 2px 1px;
		`}
`

const Tree = styled.ul`
	flex: 1;
	overflow: hidden;
`

const TreeRow = styled.li`
	display: flex;
	align-items: center;
	height: 16px;
	list-style: none;
`

const Twist = styled.span`
	margin: 0 3px 0 4px;
`

const TreeLabel = styled.span`
	padding-left: 4px;
`

const Guide = styled.span`
	align-self: flex-start;
	flex: none;
	width: ${({ $width = 1 }) => $width}px;
	height: ${({ $half }) => ($half ? 8 : 16)}px;
	margin-left: ${({ $indent = 0 }) => $indent}px;
	border-left: 1px dotted #808080;
`

const Dash = styled.span`
	flex: none;
	width: 10px;
	border-top: 1px dotted #808080;
`

const TreeItem = styled.span`
	display: flex;
	align-items: center;
	gap: 4px;
	height: 16px;
	padding: 0 5px 0 0;
	background: ${({ $active }) => ($active ? '#d9d9d9' : 'none')};
`

const PartItem = styled.span`
	display: flex;
	align-items: center;
	height: 16px;
	margin-left: ${({ $active }) => ($active ? 7 : 0)}px;
	padding-right: 2px;
	background: ${({ $active }) => ($active ? '#cce8ff' : 'none')};

	> ${Dash} {
		width: ${({ $active }) => ($active ? 2 : 9)}px;
	}

	> span:last-child {
		height: 16px;
		margin-left: 4px;
		padding: 0 2px;
		background: ${({ $active }) => ($active ? '#2a6ccf' : 'none')};
	}
`

const ScrollBar = styled.div`
	display: flex;
	flex-direction: column;
	flex: none;
	width: 16px;
	background: #f0f0f0;
`

const Track = styled.div`
	flex: 1;
`

const Thumb = styled.div`
	height: ${({ $height }) => $height};
	background: #cdcdcd;
	position: relative;
	top: ${({ $top = 0 }) => $top};
`

// work area
const Work = styled.section`
	display: flex;
	flex-direction: column;
	flex: 1;
	min-width: 0;
`

const EditTools = styled.div`
	display: flex;
	align-items: center;
	gap: 7px;
	flex: none;
	height: 28px;
	padding-left: 3px;
	border-radius: 3px;
	background: ${silver};
`

const FloorPick = styled.label`
	display: flex;
	align-items: center;
	gap: 6px;
	height: 22px;
	margin-left: -2px;

	select {
		appearance: none;
		width: 48px;
		height: 22px;
		padding: 0 3px;
		border: 0;
		background: #fff;
	}
`

const Panes = styled.div`
	display: flex;
	gap: 4px;
	flex: 1;
	min-height: 0;
	padding-right: 3px;
`

const Parts = styled.div`
	display: flex;
	flex-direction: column;
	width: 184px;
	padding: 3px 0 2px;
	font-family: ${song};
`

const SearchRow = styled.div`
	display: flex;
	align-items: center;
	flex: none;
	gap: 3px;
	height: 27px;
	padding: 0 1px;
	background: #fff;

	input {
		flex: 1;
		min-width: 0;
		height: 24px;
		padding: 0 3px;
		border: 1px solid #7a7a7a;
		background: #fff;
		outline: 0;
	}

	input::placeholder {
		color: #777;
	}

	button {
		width: 22px;
	}
`

const Editor = styled.div`
	display: flex;
	flex-direction: column;
	flex: 1;
	min-width: 0;
	padding-bottom: 3px;
	font-family: ${song};
`

const Tab = styled.button`
	align-self: flex-start;
	flex: none;
	height: 21px;
	margin-bottom: -1px;
	padding: 0 7px 0 6px;
	border: 1px solid #d9d9d9;
	border-bottom: 0;
	background: #fff;
	z-index: 1;
`

const EditorBody = styled.div`
	flex: 1;
	min-height: 0;
	padding: 3px 1px 1px 2px;
	border: 1px solid #d9d9d9;
	background: #fff;
`

const SheetFrame = styled.div`
	position: relative;
	height: 100%;
	padding: 1px;
	border: 1px solid #a0a0a8;
	background: #fff;
`

const Sheet = styled.table`
	width: 369px;
	border-spacing: 0;
	table-layout: fixed;

	th,
	td {
		height: 19px;
		padding: 0;
		border: 1px solid #c0c0c0;
		border-width: 0 1px 1px 0;
		font-weight: 400;
		line-height: 16px;
		overflow: hidden;
	}

	th {
		width: 21px;
		background: linear-gradient(90deg, #fafafa, #eee);
	}

	thead th {
		height: 23px;
		background: ${silver};
	}

	thead th:nth-child(2) {
		width: 191px;
	}

	thead th.value {
		width: 126px;
		background: linear-gradient(#f9d9a0, #f2c062);
		color: #5a0046;
	}

	thead th:last-child {
		width: 31px;
	}
`

const inks = { b: '#0000ff', n: '#000', s: '#000', g: '#808080' }

const PropRow = styled.tr`
	td.name > div {
		display: flex;
		align-items: center;
		height: 18px;
		padding-left: ${({ $kind }) => ({ g: 2, s: 8 })[$kind] ?? 20}px;
		color: ${({ $kind }) => inks[$kind]};
	}

	td.value {
		padding-left: 2px;
	}

	td.value svg {
		display: inline-block;
		vertical-align: -2px;
	}

	td.extra {
		text-align: center;
	}

	td.extra input {
		appearance: none;
		display: block;
		width: 13px;
		height: 13px;
		margin: 0 auto;
		border: 1px solid #222;
		background: #fff;
	}

	${({ $active }) =>
		$active &&
		css`
			th {
				background: #ffd58d;
				color: #5a0046;
			}

			td.name {
				background: #0078d7;
			}

			td.name > div {
				color: #fff;
			}

			td.value {
				background: #d6e8f8;
			}
		`}
`

const Sign = styled.button`
	width: 13px;
	height: 13px;
	margin-right: 5px;
	border: 1px solid #a0a0a0;
	background:
		linear-gradient(#000, #000) center / 7px 1px no-repeat,
		${({ $plus }) => $plus && 'linear-gradient(#000, #000) center / 1px 7px no-repeat,'} #fff;
`

const Elbow = styled.span`
	display: flex;
	align-items: center;
	width: 17px;
	height: 18px;
	margin-right: 5px;
	background:
		linear-gradient(#b4b4b4, #b4b4b4) left top / 1px ${({ $last }) => ($last ? '50%' : '100%')} no-repeat,
		linear-gradient(#b4b4b4, #b4b4b4) center / 100% 1px no-repeat;
`

const Floating = styled.div`
	position: absolute;
	right: 16px;
	top: 0;
	width: 269px;
	height: 283px;
	padding: 8px;
	border: 1px solid #4c4c4c;
	background: linear-gradient(#bccbda, #d7e3f0 30px, #dae4f0);

	h3 {
		padding: 2px 0 5px;
		color: #909090;
	}

	> svg {
		display: block;
		outline: 1px solid #f4f4f4;
	}
`

const Mark = styled.svg`
	position: absolute;
	left: 157px;
	top: 378px;
`

// status line
const Status = styled.footer`
	display: flex;
	gap: 2px;
	flex: none;
	height: 21px;
	padding: 1px 0;
	font-family: ${song};
`

const StatusCell = styled.span`
	${({ $grow, $width }) => ($grow ? 'flex: 1;' : `width: ${$width}px;`)}
	padding: 0 1px;
	border: 1px solid #d4d4d4;
	background: ${silver};
`

// task bar
const Tasks = styled.div`
	display: flex;
	align-items: stretch;
	flex: none;
	height: 40px;
	background: #030b0e;
	color: #fff;
`

const Start = styled.button`
	display: flex;
	align-items: center;
	justify-content: center;
	width: 48px;
	background: #000;
`

const TaskSearch = styled.div`
	display: flex;
	align-items: center;
	gap: 4px;
	width: 344px;
	padding: 0 12px 0 8px;
	background: #333;

	input {
		flex: 1;
		min-width: 0;
		padding: 0;
		border: 0;
		background: none;
		font-size: 14px;
		outline: 0;
	}

	input::placeholder {
		color: #a0a0a0;
	}
`

const Task = styled.button`
	position: relative;
	display: flex;
	align-items: center;
	justify-content: center;
	width: 49px;
	background: ${({ $active }) => ($active ? '#4a5254' : 'none')};

	&::after {
		content: '';
		position: absolute;
		inset: auto ${({ $active }) => ($active ? 0 : 4)}px 0;
		height: 2px;
		background: ${({ $running }) => ($running ? '#76b9ed' : 'none')};
	}
`

const Alert = styled.svg`
	position: absolute;
	right: 6px;
	top: 5px;
`

const TaskGap = styled.span`
	align-self: center;
	width: 4px;
	height: 16px;
	margin: 0 11px;
	border: 1px solid #3c4446;
	border-width: 0 1px;
`

const Tray = styled.div`
	display: flex;
	align-items: center;
	margin-left: auto;
`

const Stack = styled.div`
	display: flex;
	flex-direction: column;
	align-items: center;
	line-height: 18px;
`

const TrayIcons = styled.div`
	display: flex;
	align-items: center;
	gap: 9px;
	padding: 0 18px;

	span {
		font-size: 14px;
	}
`

const Center = styled.button`
	position: relative;
	display: flex;
	align-items: center;
	justify-content: center;
	width: 60px;
	height: 40px;
	padding-right: 6px;
`

const Count = styled.span`
	position: absolute;
	left: 28px;
	top: 18px;
	width: 16px;
	height: 16px;
	border: 1px solid #888;
	border-radius: 50%;
	background: #333;
	font-weight: 700;
	line-height: 14px;
`
